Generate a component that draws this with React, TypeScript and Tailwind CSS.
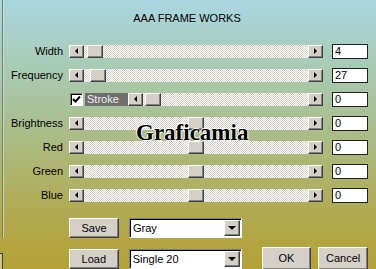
import React from 'react'

const font = { fontFamily: '"Liberation Sans", Arial, sans-serif' }

const raised =
  'bg-[#d4d0c8] border border-t-white border-l-white border-r-[#404040] border-b-[#404040] shadow-[inset_-1px_-1px_#808080]'

function Arrow({ dir }: { dir: 'left' | 'right' | 'down' }) {
  if (dir === 'down') {
    return <span className="block w-0 h-0 border-l-[4px] border-r-[4px] border-t-[4px] border-l-transparent border-r-transparent border-t-black" />
  }
  return dir === 'left' ? (
    <span className="block w-0 h-0 border-t-[3px] border-b-[3px] border-r-[3px] border-t-transparent border-b-transparent border-r-black" />
  ) : (
    <span className="block w-0 h-0 border-t-[3px] border-b-[3px] border-l-[3px] border-t-transparent border-b-transparent border-l-black" />
  )
}

function ArrowBtn({ dir }: { dir: 'left' | 'right' }) {
  return (
    <div className={`${raised} w-[15px] h-full flex items-center justify-center shrink-0`}>
      <Arrow dir={dir} />
    </div>
  )
}

function Slider({ pos }: { pos: number }) {
  return (
    <div className="flex h-[13px] flex-1">
      <ArrowBtn dir="left" />
      <div className="relative flex-1 bg-[image:repeating-conic-gradient(#d4d0c8_0_25%,#ffffff_0_50%)] bg-[length:2px_2px]">
        <div className={`${raised} absolute top-0 h-full w-[16px]`} style={{ left: pos }} />
      </div>
      <ArrowBtn dir="right" />
    </div>
  )
}

function ValueBox({ value }: { value: string }) {
  return (
    <div className="w-[36px] h-[15px] bg-white border border-[#202020] text-[11px] leading-[13px] pl-[2px] text-black">
      {value}
    </div>
  )
}

function Row({ label, value, pos }: { label: string; value: string; pos: number }) {
  return (
    <div className="flex items-center h-6">
      <div className="w-[57px] text-right text-[11px] text-black">{label}</div>
      <div className="flex flex-1 ml-[6px] mr-[9px]">
        <Slider pos={pos} />
      </div>
      <ValueBox value={value} />
    </div>
  )
}

function Combo({ value }: { value: string }) {
  return (
    <div className="w-[113px] h-5 bg-white border border-t-[#808080] border-l-[#808080] border-b-white border-r-white shadow-[inset_1px_1px_#000] flex items-center pl-[3px] pr-[1px]">
      <span className="flex-1 text-[11px] text-black">{value}</span>
      <div className={`${raised} w-[16px] h-[16px] flex items-center justify-center`}>
        <Arrow dir="down" />
      </div>
    </div>
  )
}

function Button({ label, className = '' }: { label: string; className?: string }) {
  return (
    <div className={`${raised} w-[50px] flex items-center justify-center text-[11px] text-black ${className}`}>
      {label}
    </div>
  )
}

export default function App() {
  return (
    <div
      className="relative w-[376px] h-[269px] overflow-hidden bg-[linear-gradient(180deg,#a9d6e0_0%,#a8cbb4_25%,#a9c196_42%,#acb878_58%,#b0ad5a_74%,#b3a43e_92%,#b4a238_100%)]"
      style={font}
    >
      {/* left frame edge */}
      <div className="absolute left-[2px] top-0 h-[238px] w-px bg-[#7a7a7a]" />
      <div className="absolute left-[3px] top-0 h-[238px] w-px bg-[#d8e8e0]/60" />
      <div className="absolute left-0 top-[253px] h-[16px] w-[3px] border-r border-t border-[#404040] bg-white/40" />

      <div className="flex flex-col pl-[6px] pr-[8px]">
        <div className="h-[39px] pt-[10px] text-center text-[11px] text-black">AAA FRAME WORKS</div>

        <Row label="Width" value="4" pos={3} />
        <Row label="Frequency" value="27" pos={6} />

        <div className="flex items-center h-6">
          <div className="w-[57px]" />
          <div className="flex flex-1 ml-[7px] mr-[9px] items-center">
            <div className="w-[13px] h-[13px] bg-white border border-t-[#808080] border-l-[#808080] border-b-white border-r-white shadow-[inset_1px_1px_#000] flex items-center justify-center">
              <svg width="9" height="9" viewBox="0 0 9 9">
                <path d="M1 4 L3.5 6.5 L8 1.5" stroke="#000" strokeWidth="2" fill="none" />
              </svg>
            </div>
            <div className="ml-[2px] h-[13px] w-[43px] bg-[#6e6e6e] text-[#eeeeee] text-[11px] leading-[13px] pl-[2px]">
              Stroke
            </div>
            <Slider pos={2} />
          </div>
          <ValueBox value="0" />
        </div>

        <Row label="Brightness" value="0" pos={104} />
        <Row label="Red" value="0" pos={104} />
        <Row label="Green" value="0" pos={104} />
        <Row label="Blue" value="0" pos={104} />

        <div className="flex mt-[11px] h-5 pl-[63px]">
          <Button label="Save" className="h-5" />
          <div className="ml-[10px]">
            <Combo value="Gray" />
          </div>
        </div>

        <div className="flex mt-[9px] pl-[63px] items-start">
          <Button label="Load" className="h-5 mt-[2px]" />
          <div className="ml-[10px] mt-[2px]">
            <Combo value="Single 20" />
          </div>
          <Button label="OK" className="h-[23px] ml-[20px]" />
          <Button label="Cancel" className="h-[23px] ml-[7px]" />
        </div>
      </div>

      {/* watermark */}
      <div
        className="absolute left-[136px] top-[116px] text-[23px] font-bold text-black [text-shadow:1px_1px_0_#fff,-1px_0_0_#fff,0_-1px_0_#fff]"
        style={{ fontFamily: '"Liberation Serif", "Times New Roman", serif' }}
      >
        Graficamia
      </div>
    </div>
  )
}
